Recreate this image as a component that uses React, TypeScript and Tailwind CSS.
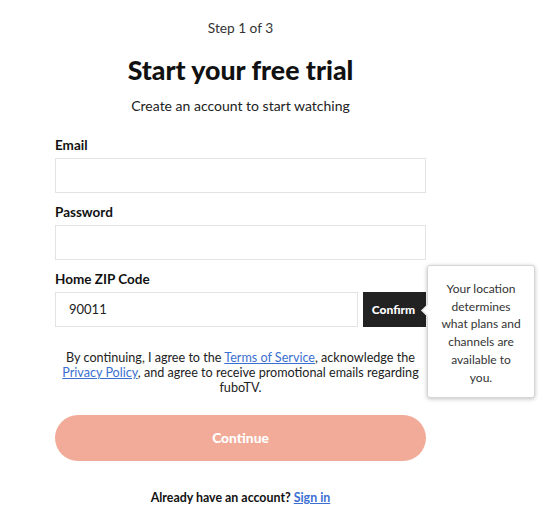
import React from "react";

export default function App() {
  return (
    <div
      className="relative w-[541px] h-[528px] bg-white text-[#222]"
      style={{ fontFamily: "Lato, 'Open Sans', sans-serif" }}
    >
      <div className="ml-[55px] w-[371px] pt-[19px] flex flex-col">
        <div className="text-center text-[13.7px] leading-[18px] text-[#333]">Step 1 of 3</div>
        <h1 className="mt-[17px] text-center text-[26.7px] leading-[32px] font-black text-[#111]">
          Start your free trial
        </h1>
        <div className="mt-[11px] text-center text-[14px] leading-[18px] text-[#222]">
          Create an account to start watching
        </div>

        <label className="mt-[22px] text-[13.5px] leading-[16px] font-bold text-[#111]">Email</label>
        <div className="mt-[5px] h-[35px] border border-[#e3e3e3] bg-white" />

        <label className="mt-[11px] text-[13.5px] leading-[16px] font-bold text-[#111]">Password</label>
        <div className="mt-[5px] h-[35px] border border-[#e3e3e3] bg-white" />

        <label className="mt-[11px] text-[13.5px] leading-[16px] font-bold text-[#111]">Home ZIP Code</label>
        <div className="mt-[5px] flex gap-[5px] h-[35px]">
          <div className="flex-1 border border-[#e3e3e3] bg-white flex items-center pl-[13px] text-[13px] text-[#222]">
            90011
          </div>
          <div className="w-[63px] bg-[#222] text-white flex items-center justify-center text-[12px] font-black pr-[2px]">
            Confirm
          </div>
        </div>

        <p className="mt-[23px] text-center text-[12.6px] leading-[15px] text-[#222]">
          By continuing, I agree to the{" "}
          <span className="text-[#3b6fd1] underline">Terms of Service</span>, acknowledge the
          <br />
          <span className="text-[#3b6fd1] underline">Privacy Policy</span>, and agree to receive promotional emails regarding
          <br />
          fuboTV.
        </p>

        <div className="mt-[20px] h-[46px] rounded-full bg-[#f2ab98] flex items-center justify-center text-white text-[13.8px] font-black">
          Continue
        </div>

        <div className="mt-[29px] text-center text-[12.4px] leading-[16px] font-bold text-[#111]">
          Already have an account? <span className="text-[#3b6fd1] underline">Sign in</span>
        </div>
      </div>

      <div className="absolute left-[427px] top-[265px] w-[108px] h-[133px] bg-white border border-[#d6d6d6] rounded-[3px] shadow-[0_1px_4px_rgba(0,0,0,0.25)] px-[6px] pt-[14px] text-center text-[12px] leading-[17.7px] text-[#333]">
        <div className="absolute left-[-5px] top-[40px] w-[9px] h-[9px] bg-white border-l border-b border-[#d6d6d6] rotate-45" />
        Your location
        <br />
        determines
        <br />
        what plans and
        <br />
        channels are
        <br />
        available to
        <br />
        you.
      </div>
    </div>
  );
}
